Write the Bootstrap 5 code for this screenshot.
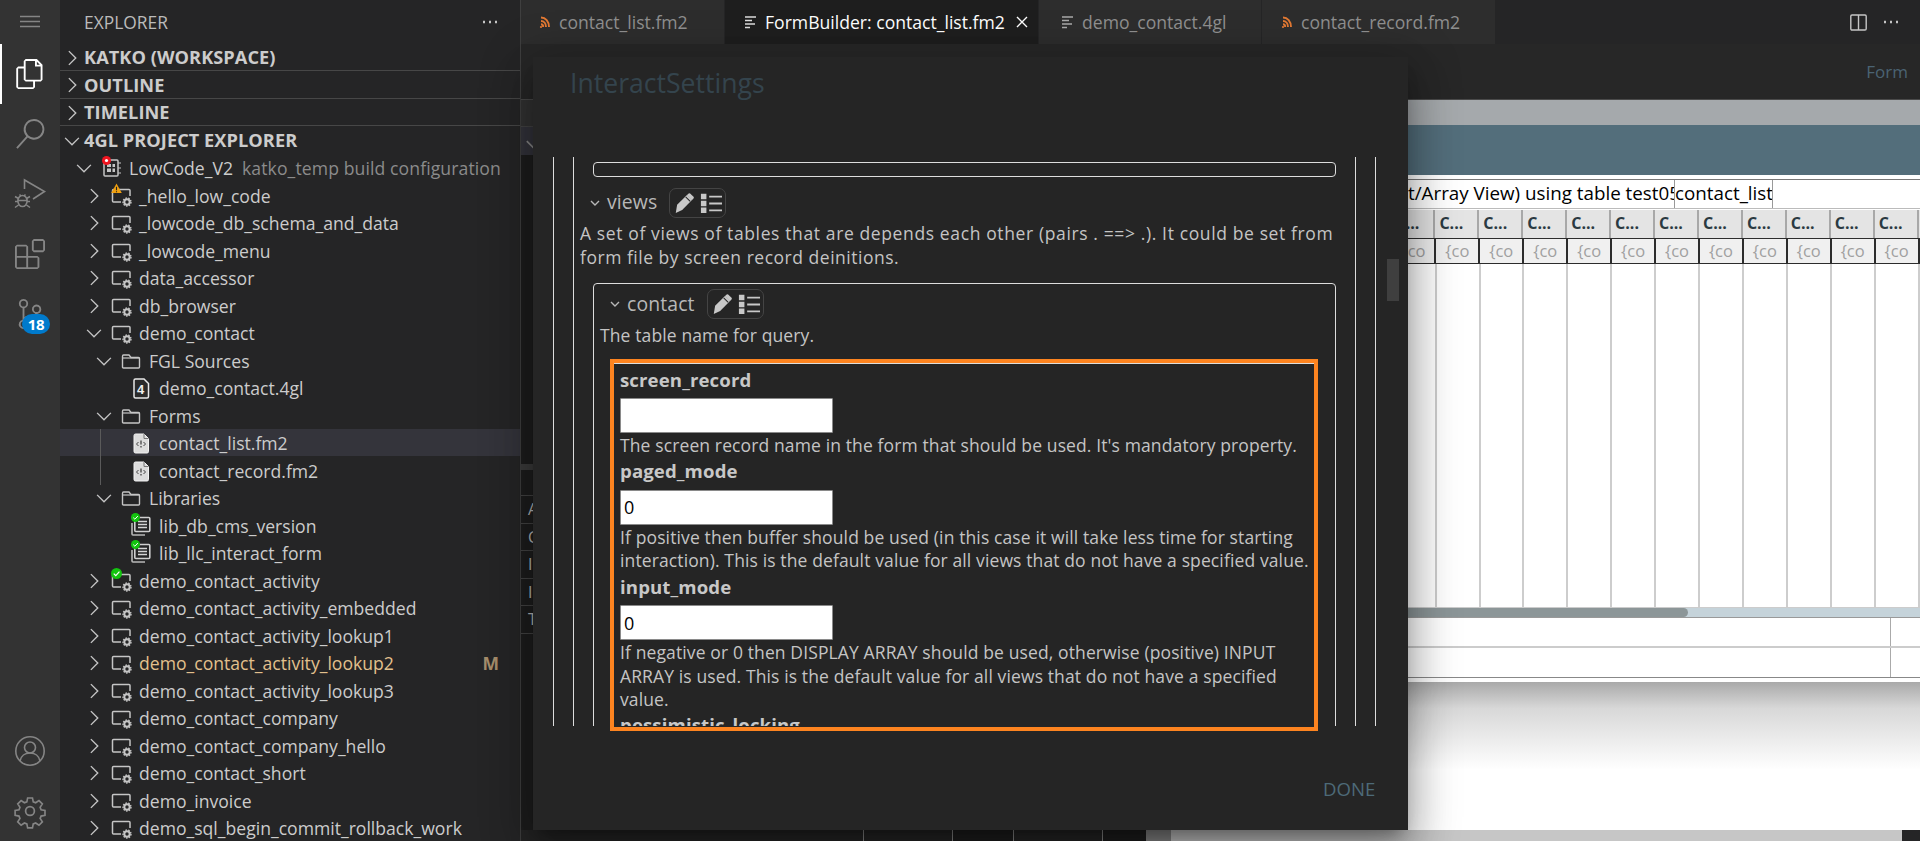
<!DOCTYPE html>
<html lang="en">
<head>
<meta charset="utf-8">
<title>FormBuilder: contact_list.fm2</title>
<link href="https://cdn.jsdelivr.net/npm/bootstrap@5.3.0/dist/css/bootstrap.min.css" rel="stylesheet">
<style>
html,body{height:100%;margin:0}
body{width:1920px;height:841px;overflow:hidden;background:#252526;color:#ccc;font-family:"Open Sans","Noto Sans",sans-serif;font-size:17.6px;position:relative}
.actbar{width:60px;background:#333;flex:none}
.actitem{height:60px;width:60px;color:#858585}
.actitem.on{color:#fff;border-left:2px solid #fff;padding-right:2px}
.scbadge{position:absolute;left:22px;top:30px;width:28px;height:20px;border-radius:10px;background:#007acc;color:#fff;font-size:15px;font-weight:700;line-height:20px;text-align:center;letter-spacing:-.3px}
.sidebar{width:460px;background:#252526;flex:none;overflow:hidden}
.sidetitle{height:44px;padding:0 24px 0 24px;font-size:17.4px;letter-spacing:0;color:#bbb}
.sechead{height:27.5px;font-weight:700;font-size:18.2px;letter-spacing:.05px;color:#ccc;border-bottom:1px solid #474747;padding:2px 0 0 2px}
.sechead.last{border-bottom:0}
.sechead .ch{margin-right:2px}
.ch{width:20px;height:20px;flex:none;color:#c5c5c5}
.trow{height:27.5px;white-space:nowrap;padding-top:2px}
.lv0{padding-left:14px}.lv1{padding-left:24px}.lv2{padding-left:34px}.lv3{padding-left:44px}
.spacer20{width:20px;flex:none}
.ico{width:22px;height:22px;flex:none;margin:0 7px 0 6px;position:relative;color:#c5c5c5}
.ico>svg{display:block;width:22px;height:22px}
.ico .st{position:absolute;left:1px;top:-2px;width:11px;height:11px}
.muted1{color:#8b8b8b;margin-left:9px;letter-spacing:.1px}
.mod{color:#e2c08d}
.mflag{color:#a58d6b;font-weight:700;margin-left:auto;margin-right:21px;font-size:17.5px}
.hoverrow{background:#34343b}
.guidewrap{position:relative}
.guidewrap::before{content:"";position:absolute;left:40px;top:0;bottom:-1px;width:1px;background:#5a5a5a;z-index:1}
.mainpane{width:1400px;flex:none;border-left:1px solid #3f3f3f;margin-left:0}
.tabbar{height:44px;background:#252526;flex:none}
.tabx{height:44px;flex:none;background:#2d2d2d;color:#8f8f8f;border-right:1px solid #252526;white-space:nowrap;overflow:hidden}
.tabx.active{background:#1e1e1e;color:#fff}
.t1{width:204px;padding-left:17px}.t2{width:314px;padding-left:19px}.t3{width:223px;padding-left:22px}.t4{width:234px;padding-left:18px}
.tabico{width:14px;height:16px;flex:none;margin-right:7px}
.topzone{height:56px;background:#272727;flex:none;color:#4b6373;font-size:17px;padding-right:12px;border-bottom:1px solid #4a4a4a}
.bodyzone{height:730px;flex:none}
.leftstub{width:13px;flex:none;background:#1e1e1e;overflow:hidden}
.stub1{height:27px;background:#333;border-bottom:1px solid #444}
.stub2{height:28px;background:#34343c;color:#888}
.stub3{height:315px;background:#1e1e1e;border-bottom:6px solid #3c3c3c}
.stub4{height:25px}
.stub5{height:27.5px;border-top:1px solid #444;padding-left:7px;font-size:16px;color:#bbb;line-height:27px}
.darkgap{width:612px;flex:none;background:#1e1e1e}
.canvasx{width:775px;flex:none;background:#fff}
.fbar{height:25px;background:#a5a9ac}
.fhead{height:50px;background:#536e7b}
.ftitlebar{height:30px;margin:4px 0 1px 25px;border-top:1px solid #777;border-bottom:1px solid #bbb;color:#000;font-size:18.8px;white-space:nowrap}
.fcaption{width:503px;overflow:hidden;flex:none;justify-content:flex-end;display:flex;line-height:27px}
.fcaption span{margin-right:-6px}
.fvalue{width:99px;border-left:1px solid #999;border-right:1px solid #999;flex:none;line-height:27px;overflow:hidden}
.gridrow{padding-left:220.500px;margin-left:25px;display:grid;grid-template-columns:repeat(14,43.93px)}
.hcell{height:28px;background:#e4e4e4;border-right:2px solid #a8a8a8;color:#2b3a42;font-weight:700;font-size:16px;padding-left:4px;line-height:26px;overflow:hidden;white-space:nowrap}
.icell{height:26px;background:#f0f0f0;border:1px solid #2c2c2c;color:#a0a0a0;font-size:16.5px;line-height:23px;text-align:center;overflow:hidden;white-space:nowrap}
.gridfill{height:343px;margin-left:25px;background-image:repeating-linear-gradient(90deg,#cdcdcd 0,#cdcdcd 2px,transparent 2px,transparent 43.93px);background-position:0 0}
.hscroll{height:11px;margin-left:25px;background:#c5d3da;border-top:1px solid #ccc;border-bottom:1px solid #999}
.hthumb{width:517px;height:100%;background:#8c9698;border-radius:0 5px 5px 0}
.frow{height:30px;margin-left:25px;border-bottom:2px solid #ccc}
.frow.endrow{border-bottom:1px solid #888}
.fcut{width:720px;flex:none;border-right:1px solid #aaa}
.fshadow{height:88px;background:linear-gradient(#a9a9a9,#d8d8d8 30%,#fff);margin-top:4px}
.botstrip{height:11px;flex:none}
.bdark{width:625px;flex:none;background:#1e1e1e}
.bseg{height:100%;background:#252525;flex:none;border-right:1px solid #888}
.bgut{width:25px;flex:none;background:#888}
.bgrey{width:731px;flex:none;background:#c6c6c6}
.dlg{position:absolute;left:533px;top:57px;width:875px;height:773px;background:#252525;border:0;border-radius:0;box-shadow:0 11px 15px -7px rgba(0,0,0,.3),0 24px 38px 3px rgba(0,0,0,.22),0 9px 46px 8px rgba(0,0,0,.2);z-index:5}
.dlgtitle{height:100px;padding:8px 0 0 37px;font-size:26.6px;color:#34444d;line-height:36px}
.scroller{height:569px;margin-left:20px;width:823px;overflow:hidden;font-size:17.5px;line-height:23.6px;letter-spacing:.12px;color:#c4c4c4;white-space:nowrap}
.nest1{border-left:1px solid #ddd;border-right:1px solid #ddd;padding:0 19px;height:569px;overflow:hidden}
.nest2{border-left:1px solid #ddd;border-right:1px solid #ddd;padding:5px 19px 0 6px}
.emptybox{height:15px;margin-left:13px;border:1px solid #ddd;border-radius:4px;margin-right:0}
.proprow{height:30px;color:#b8b8b8}
.proprow.p1{margin:11px 0 4px 8px}
.proprow.p2{margin:5px 0 5px 0}
.proprow.p1 .propname{margin-top:-2px}
.miniCh{width:14px;height:14px;flex:none;margin-right:5px}
.propname{font-size:19.4px}
.ibtn{margin-left:12px;width:57px;height:30px;border:1px solid #444;border-radius:7px;flex:none;padding:0 3px;gap:5px}
.ibtn svg{width:22px;height:22px;color:#c8c8c8;display:block}
.viewbox{margin:14px 0 0 13px;border:1px solid #ddd;border-radius:4px 4px 0 0;padding:0 6px;height:500px}
.viewbox .proprow .miniCh{margin-left:8px}
.descline{margin:0}
.stretch1{letter-spacing:.62px}
.stretch2{letter-spacing:.52px}
.innercard{margin:15px 12px 0 12px;border-top:1px solid #ddd;padding:4px 0 0 8px}
.flabel{font-weight:700;font-size:18.6px;line-height:24px;color:#c8c8c8;margin:0}
.finput{display:block;width:213px;height:35px;padding:0 3px;margin:6.500px 0 1px;border:1px solid #8a8a8a;border-radius:1px;background:#fff;color:#000;font-size:18px;line-height:28px;font-family:inherit}
.finput:focus{background:#fff;color:#000;box-shadow:none;border-color:#8a8a8a}
.fdesc{margin:0 0 1.500px;line-height:23.6px}
.orangebox{position:absolute;left:77px;top:302px;width:708px;height:372px;border:4px solid #fd8420;pointer-events:none}
.vthumb{position:absolute;left:854px;top:202px;width:12px;height:42px;background:#3f3f3f}
.donebtn{position:absolute;left:790px;top:717px;padding:0;border:0;background:none;font-size:18.6px;color:#4d6a78;line-height:30px}
.donebtn:hover{color:#4d6a78}
svg{overflow:visible}
</style>
</head>
<body class="d-flex">
<svg width="0" height="0" class="position-absolute">
<defs>
<symbol id="cr" viewBox="0 0 16 16"><path d="M5.5 2.5 11 8l-5.500 5.500" fill="none" stroke="currentColor" stroke-width="1.1"/></symbol>
<symbol id="cd" viewBox="0 0 16 16"><path d="M2.500 5.500 8 11l5.500-5.500" fill="none" stroke="currentColor" stroke-width="1.1"/></symbol>
<symbol id="prj" viewBox="0 0 22 22"><path d="M20 11V5.500q0-1-1-1H3.500q-1 0-1 1V16q0 1 1 1H11" fill="none" stroke="currentColor" stroke-width="1.500"/><circle cx="17" cy="17" r="2.700" fill="none" stroke="currentColor" stroke-width="2"/><circle cx="17" cy="17" r="4" fill="none" stroke="currentColor" stroke-width="1.400" stroke-dasharray="1.500 1.300"/></symbol>
<symbol id="fld" viewBox="0 0 22 22"><path d="M2.500 6.500q0-1.500 1-1.500H9l2 2.500h7.500q1 0 1 1V17q0 1-1 1h-15q-1 0-1-1z" fill="none" stroke="currentColor" stroke-width="1.400"/><path d="M2.500 8h17" stroke="currentColor" stroke-width="1.200"/></symbol>
<symbol id="fm" viewBox="0 0 22 22"><path d="M4 3.500q0-1.500 1.500-1.500H14l4.500 4.500v13q0 1.500-1.500 1.500H5.500Q4 21 4 19.500z" fill="#dcdcdc" stroke="#f2f2f2"/><path d="M14 2v4.500h4.500" fill="none" stroke="#777"/><path d="M8.500 10 6.500 12l2 2m5-4 2 2-2 2" fill="none" stroke="#444" stroke-width="1"/><path d="M11 8.500v4m0 1.500v1.500" stroke="#444" stroke-width="1.300"/></symbol>
<symbol id="lib" viewBox="0 0 22 22"><path d="M2 8v11q0 1 1 1h12" fill="none" stroke="#b8b8b8" stroke-width="1.600"/><rect x="4.800" y="2.500" width="15" height="14" rx="1" fill="none" stroke="#cfcfcf" stroke-width="1.600"/><path d="M8 6.500h9M8 9.500h9M8 12.500h9" stroke="#d5d5d5" stroke-width="1.500"/></symbol>
<symbol id="rss" viewBox="0 0 14 16"><path d="M3 3.500c4.500 0 8 3.800 8 9.500M3 7c2.800 0 5 2.500 5 6M3 10.300c1.300 0 2.200 1.200 2.200 2.700" fill="none" stroke="#e37933" stroke-width="1.900"/><circle cx="3" cy="13" r="1.100" fill="#e37933"/></symbol>
<symbol id="lines" viewBox="0 0 14 16"><path d="M1 3h11M1 6.500h7M1 10h10M1 13.500h5" fill="none" stroke="currentColor" stroke-width="1.500"/></symbol>
<symbol id="pen" viewBox="0 0 24 24"><path d="M3 23 4.500 14 15.500 3 21 8.500 10 19.500z" fill="currentColor"/><path d="M16.700 1.800q1-1 2-.2l3.700 3.600q.9 1-.1 2L20.800 8.600 15.400 3.200z" fill="currentColor"/><path d="M13.800 5.300l5 5" stroke="#252525" stroke-width="1.100"/></symbol>
<symbol id="lst" viewBox="0 0 24 24"><path d="M1 2h6v6H1zm0 7.500h6v6H1zM1 17h6v6H1zM10 4h14v2H10zm0 7.500h14v2H10zm0 7.500h14v2H10z" fill="currentColor"/></symbol>
<symbol id="warn" viewBox="0 0 12 12"><path d="M6 .5 11.800 11H.2z" fill="#f0a010"/><path d="M6 4v4M6 9v1.200" stroke="#222" stroke-width="1.200"/></symbol>
<symbol id="ok" viewBox="0 0 12 12"><circle cx="6" cy="6" r="6" fill="#13c40f"/><path d="M3 6.200 5.200 8.300 9.200 4" fill="none" stroke="#fff" stroke-width="1.300"/></symbol>
</defs>
</svg>

<aside class="actbar d-flex flex-column">
  <div class="d-flex align-items-center justify-content-center" style="height:44px;color:#858585">
    <svg width="20" height="14" viewBox="0 0 20 14"><path d="M0 1.500h20M0 6.500h20M0 11.500h20" stroke="currentColor" stroke-width="1.300"/></svg>
  </div>
  <div class="actitem on d-flex align-items-center justify-content-center">
    <svg width="30" height="30" viewBox="0 0 24 24"><path fill="currentColor" d="M17.500 0h-9L7 1.500V6H2.500L1 7.500v15.070L2.500 24h12.070L16 22.570V18h4.700l1.300-1.430V4.500L17.500 0zm0 2.120l2.380 2.380H17.500V2.120zm-3 20.380h-12v-15H7v9.070L8.500 18h6v4.500zm6-6h-12v-15H16V6h4.500v10.500z"/></svg>
  </div>
  <div class="actitem d-flex align-items-center justify-content-center">
    <svg width="30" height="30" viewBox="0 0 24 24"><path fill="currentColor" d="M15.250 0a8.250 8.250 0 0 0-6.180 13.720L1 22.880l1.120 1 8.050-9.120A8.251 8.251 0 1 0 15.250.01V0zm0 15a6.750 6.750 0 1 1 0-13.500 6.750 6.750 0 0 1 0 13.500z"/></svg>
  </div>
  <div class="actitem d-flex align-items-center justify-content-center">
    <svg width="30" height="30" viewBox="0 0 30 30"><path d="M9.500 10V1L29.500 12.500 18 20" fill="none" stroke="currentColor" stroke-width="1.600"/><ellipse cx="7.500" cy="22" rx="4.600" ry="5.500" fill="none" stroke="currentColor" stroke-width="1.600"/><path d="M3 21.500h9M0 17.500l3.500 2M15 17.500l-3.500 2M0 22.500h3M12 22.500h3M0 28.500l3.500-2.500M15 28.500l-3.500-2.500M4.500 15.500l1.500 1.500M10.500 15.500 9 17" stroke="currentColor" stroke-width="1.500" fill="none"/></svg>
  </div>
  <div class="actitem d-flex align-items-center justify-content-center">
    <svg width="30" height="30" viewBox="0 0 24 24"><path fill="currentColor" d="M13.500 1.500L15 0h7.500L24 1.500V9l-1.500 1.500H15L13.500 9V1.500zm1.500 0V9h7.500V1.500H15zM0 15V6l1.500-1.500H9L10.500 6v7.500H18l1.500 1.500v7.500L18 24H1.500L0 22.500V15zm9-1.500V6H1.500v7.500H9zM9 15H1.500v7.500H9V15zm1.500 7.500H18V15h-7.500v7.500z"/></svg>
  </div>
  <div class="actitem position-relative d-flex align-items-center justify-content-center">
    <svg width="30" height="30" viewBox="0 0 24 24"><path fill="currentColor" d="M21.007 8.222A3.738 3.738 0 0 0 15.045 5.200a3.737 3.737 0 0 0 1.156 6.583 2.988 2.988 0 0 1-2.668 1.670h-2.990a4.456 4.456 0 0 0-2.989 1.165V7.400a3.737 3.737 0 1 0-1.494 0v9.117a3.776 3.776 0 1 0 1.816.099 2.990 2.990 0 0 1 2.668-1.667h2.990a4.484 4.484 0 0 0 4.223-3.039 3.736 3.736 0 0 0 3.250-3.687zM4.565 3.738a2.242 2.242 0 1 1 4.484 0 2.242 2.242 0 0 1-4.484 0zm4.484 16.441a2.242 2.242 0 1 1-4.484 0 2.242 2.242 0 0 1 4.484 0zm8.221-9.715a2.242 2.242 0 1 1 0-4.485 2.242 2.242 0 0 1 0 4.485z"/></svg>
    <span class="scbadge">18</span>
  </div>
  <div class="mt-auto actitem d-flex align-items-center justify-content-center">
    <svg width="30" height="30" viewBox="0 0 30 30" fill="none" stroke="currentColor" stroke-width="1.600"><circle cx="15" cy="15" r="14.200"/><circle cx="15" cy="11.500" r="5.500"/><path d="M5 25c1-5 5-8 10-8s9 3 10 8"/></svg>
  </div>
  <div class="actitem d-flex align-items-center justify-content-center">
    <svg width="30" height="30" viewBox="0 0 30 30" fill="none" stroke="currentColor" stroke-width="1.700"><circle cx="15" cy="15" r="4.400"/><path d="M12.500 1.500h5l.8 4 2.500 1 3.400-2.300 3.500 3.500-2.300 3.400 1 2.500 4 .8v5l-4 .8-1 2.500 2.300 3.400-3.500 3.500-3.400-2.300-2.500 1-.8 4h-5l-.8-4-2.500-1-3.400 2.300-3.500-3.500 2.300-3.400-1-2.500-4-.8v-5l4-.8 1-2.500L2.300 7.700l3.500-3.500 3.400 2.300 2.500-1z" transform="translate(.5 .5) scale(.97)"/></svg>
  </div>
</aside>

<aside class="sidebar d-flex flex-column">
  <div class="sidetitle d-flex align-items-center justify-content-between"><span>EXPLORER</span>
    <svg width="16" height="4" viewBox="0 0 16 4" style="margin-right:-2px"><path d="M1 2h2M7 2h2M13 2h2" stroke="#c5c5c5" stroke-width="2.400"/></svg></div>
  <div class="sechead d-flex align-items-center"><svg class="ch"><use href="#cr"/></svg>KATKO (WORKSPACE)</div>
  <div class="sechead d-flex align-items-center"><svg class="ch"><use href="#cr"/></svg>OUTLINE</div>
  <div class="sechead d-flex align-items-center"><svg class="ch"><use href="#cr"/></svg>TIMELINE</div>
  <div class="sechead last d-flex align-items-center"><svg class="ch"><use href="#cd"/></svg>4GL PROJECT EXPLORER</div>

  <div class="trow lv0 d-flex align-items-center"><svg class="ch"><use href="#cd"/></svg>
    <span class="ico"><svg viewBox="0 0 22 22"><rect x="4" y="3" width="14" height="16" rx="1" fill="none" stroke="currentColor" stroke-width="1.500"/><path d="M7 7h4v3H7zm5.500 0H15v3h-2.500zM7 11.500h4V15H7zm5.500 0H15V15h-2.500z" fill="currentColor"/><path d="M18 6h3M18 11h3M18 16h3" stroke="currentColor"/></svg><svg class="st" style="left:2px;top:-1px;width:9px;height:9px" viewBox="0 0 10 10"><circle cx="5" cy="5" r="5" fill="#ef1520"/><circle cx="5" cy="5" r="1.800" fill="#fff"/></svg></span>LowCode_V2<span class="muted1">katko_temp build configuration</span></div>
  <div class="trow lv1 d-flex align-items-center"><svg class="ch"><use href="#cr"/></svg><span class="ico"><svg><use href="#prj"/></svg><svg class="st"><use href="#warn"/></svg></span>_hello_low_code</div>
  <div class="trow lv1 d-flex align-items-center"><svg class="ch"><use href="#cr"/></svg><span class="ico"><svg><use href="#prj"/></svg></span>_lowcode_db_schema_and_data</div>
  <div class="trow lv1 d-flex align-items-center"><svg class="ch"><use href="#cr"/></svg><span class="ico"><svg><use href="#prj"/></svg></span>_lowcode_menu</div>
  <div class="trow lv1 d-flex align-items-center"><svg class="ch"><use href="#cr"/></svg><span class="ico"><svg><use href="#prj"/></svg></span>data_accessor</div>
  <div class="trow lv1 d-flex align-items-center"><svg class="ch"><use href="#cr"/></svg><span class="ico"><svg><use href="#prj"/></svg></span>db_browser</div>
  <div class="trow lv1 d-flex align-items-center"><svg class="ch"><use href="#cd"/></svg><span class="ico"><svg><use href="#prj"/></svg></span>demo_contact</div>
  <div class="trow lv2 d-flex align-items-center"><svg class="ch"><use href="#cd"/></svg><span class="ico"><svg><use href="#fld"/></svg></span>FGL Sources</div>
  <div class="trow lv3 d-flex align-items-center"><span class="spacer20"></span><span class="ico"><svg viewBox="0 0 22 22"><path d="M4 3.500q0-1.500 1.500-1.500H14l4.500 4.500v13q0 1.500-1.500 1.500H5.500Q4 21 4 19.500z" fill="#2a2a2a" stroke="#e8e8e8" stroke-width="1.500"/><text x="7" y="17" font-size="13" font-weight="700" fill="#eee" font-family="Liberation Sans, sans-serif">4</text></svg></span>demo_contact.4gl</div>
  <div class="trow lv2 d-flex align-items-center"><svg class="ch"><use href="#cd"/></svg><span class="ico"><svg><use href="#fld"/></svg></span>Forms</div>
  <div class="guidewrap">
    <div class="trow lv3 hoverrow d-flex align-items-center"><span class="spacer20"></span><span class="ico"><svg><use href="#fm"/></svg></span>contact_list.fm2</div>
    <div class="trow lv3 d-flex align-items-center"><span class="spacer20"></span><span class="ico"><svg><use href="#fm"/></svg></span>contact_record.fm2</div>
  </div>
  <div class="trow lv2 d-flex align-items-center"><svg class="ch"><use href="#cd"/></svg><span class="ico"><svg><use href="#fld"/></svg></span>Libraries</div>
  <div class="trow lv3 d-flex align-items-center"><span class="spacer20"></span><span class="ico"><svg><use href="#lib"/></svg><svg class="st" style="width:9px;height:9px"><use href="#ok"/></svg></span>lib_db_cms_version</div>
  <div class="trow lv3 d-flex align-items-center"><span class="spacer20"></span><span class="ico"><svg><use href="#lib"/></svg><svg class="st" style="width:9px;height:9px"><use href="#ok"/></svg></span>lib_llc_interact_form</div>
  <div class="trow lv1 d-flex align-items-center"><svg class="ch"><use href="#cr"/></svg><span class="ico"><svg><use href="#prj"/></svg><svg class="st"><use href="#ok"/></svg></span>demo_contact_activity</div>
  <div class="trow lv1 d-flex align-items-center"><svg class="ch"><use href="#cr"/></svg><span class="ico"><svg><use href="#prj"/></svg></span>demo_contact_activity_embedded</div>
  <div class="trow lv1 d-flex align-items-center"><svg class="ch"><use href="#cr"/></svg><span class="ico"><svg><use href="#prj"/></svg></span>demo_contact_activity_lookup1</div>
  <div class="trow lv1 d-flex align-items-center"><svg class="ch"><use href="#cr"/></svg><span class="ico"><svg><use href="#prj"/></svg></span><span class="mod">demo_contact_activity_lookup2</span><span class="mflag">M</span></div>
  <div class="trow lv1 d-flex align-items-center"><svg class="ch"><use href="#cr"/></svg><span class="ico"><svg><use href="#prj"/></svg></span>demo_contact_activity_lookup3</div>
  <div class="trow lv1 d-flex align-items-center"><svg class="ch"><use href="#cr"/></svg><span class="ico"><svg><use href="#prj"/></svg></span>demo_contact_company</div>
  <div class="trow lv1 d-flex align-items-center"><svg class="ch"><use href="#cr"/></svg><span class="ico"><svg><use href="#prj"/></svg></span>demo_contact_company_hello</div>
  <div class="trow lv1 d-flex align-items-center"><svg class="ch"><use href="#cr"/></svg><span class="ico"><svg><use href="#prj"/></svg></span>demo_contact_short</div>
  <div class="trow lv1 d-flex align-items-center"><svg class="ch"><use href="#cr"/></svg><span class="ico"><svg><use href="#prj"/></svg></span>demo_invoice</div>
  <div class="trow lv1 d-flex align-items-center"><svg class="ch"><use href="#cr"/></svg><span class="ico"><svg><use href="#prj"/></svg></span>demo_sql_begin_commit_rollback_work</div>
</aside>

<main class="mainpane d-flex flex-column">
  <div class="tabbar d-flex">
    <div class="tabx t1 d-flex align-items-center"><svg class="tabico"><use href="#rss"/></svg>contact_list.fm2</div>
    <div class="tabx t2 active d-flex align-items-center"><svg class="tabico" style="color:#ddd"><use href="#lines"/></svg>FormBuilder: contact_list.fm2
      <svg width="12" height="12" viewBox="0 0 12 12" style="margin-left:11px;flex:none"><path d="M1 1l10 10M11 1 1 11" stroke="#fff" stroke-width="1.400"/></svg></div>
    <div class="tabx t3 d-flex align-items-center"><svg class="tabico" style="color:#aaa"><use href="#lines"/></svg>demo_contact.4gl</div>
    <div class="tabx t4 d-flex align-items-center"><svg class="tabico"><use href="#rss"/></svg>contact_record.fm2</div>
    <div class="flex-grow-1 d-flex align-items-center justify-content-end" style="padding-right:21px;gap:16px">
      <svg width="17" height="17" viewBox="0 0 17 17"><rect x=".8" y="1" width="15.400" height="15" rx="1.200" fill="none" stroke="#c5c5c5" stroke-width="1.400"/><path d="M8.500 1v15" stroke="#c5c5c5" stroke-width="1.400"/></svg>
      <svg width="16" height="4" viewBox="0 0 16 4"><path d="M1 2h2M7 2h2M13 2h2" stroke="#c5c5c5" stroke-width="2.400"/></svg>
    </div>
  </div>
  <div class="topzone d-flex align-items-center justify-content-end">Form</div>
  <div class="bodyzone d-flex">
    <div class="leftstub">
      <div class="stub1"></div>
      <div class="stub2"><svg width="18" height="18" style="margin:4px 0 0 3px" viewBox="0 0 16 16"><path d="M2.500 5.500 8 11l5.500-5.500" fill="none" stroke="currentColor" stroke-width="1.500"/></svg></div>
      <div class="stub3"></div>
      <div class="stub4"></div>
      <div class="stub5">A</div><div class="stub5">C</div><div class="stub5">I</div><div class="stub5">I</div><div class="stub5">T</div><div class="stub5"></div>
    </div>
    <div class="darkgap"></div>
    <div class="canvasx">
      <div class="fbar"></div>
      <div class="fhead"></div>
      <div class="ftitlebar d-flex">
        <div class="fcaption"><span>Contact List (List/Array View) using table test05</span></div>
        <div class="fvalue">contact_list</div>
      </div>
      <div class="gridrow">
        <div class="hcell">C...</div><div class="hcell">C...</div><div class="hcell">C...</div><div class="hcell">C...</div><div class="hcell">C...</div><div class="hcell">C...</div><div class="hcell">C...</div><div class="hcell">C...</div><div class="hcell">C...</div><div class="hcell">C...</div><div class="hcell">C...</div><div class="hcell">C...</div><div class="hcell">C...</div><div class="hcell"></div>
      </div>
      <div class="gridrow">
        <div class="icell">{co</div><div class="icell">{co</div><div class="icell">{co</div><div class="icell">{co</div><div class="icell">{co</div><div class="icell">{co</div><div class="icell">{co</div><div class="icell">{co</div><div class="icell">{co</div><div class="icell">{co</div><div class="icell">{co</div><div class="icell">{co</div><div class="icell">{co</div><div class="icell"></div>
      </div>
      <div class="gridfill"></div>
      <div class="hscroll"><div class="hthumb"></div></div>
      <div class="frow d-flex"><div class="fcut"></div></div>
      <div class="frow endrow d-flex"><div class="fcut"></div></div>
      <div class="fshadow"></div>
    </div>
  </div>
  <div class="botstrip d-flex">
    <div class="bdark d-flex">
      <div class="bseg" style="width:343px"></div><div style="width:89px" class="bseg"></div><div style="width:61px;background:#1e1e1e" class="bseg"></div><div style="width:89px" class="bseg"></div>
    </div>
    <div class="bgut"></div>
    <div class="bgrey"></div>
  </div>
</main>

<section class="dlg card">
  <div class="dlgtitle">InteractSettings</div>
  <div class="scroller">
    <div class="nest1"><div class="nest2">
      <div class="emptybox"></div>
      <div class="proprow p1 d-flex align-items-center">
        <svg class="miniCh" viewBox="0 0 14 14"><path d="M3 5l4 4 4-4" fill="none" stroke="currentColor" stroke-width="1.400"/></svg>
        <span class="propname">views</span>
        <span class="ibtn d-flex align-items-center"><svg><use href="#pen"/></svg><svg><use href="#lst"/></svg></span>
      </div>
      <p class="descline"><span class="stretch1">A set of views of tables that are depends each other (pairs . ==&gt; .). It could be set from</span><br><span class="stretch2">form file by screen record deinitions.</span></p>
      <div class="viewbox">
        <div class="proprow p2 d-flex align-items-center">
          <svg class="miniCh" viewBox="0 0 14 14"><path d="M3 5l4 4 4-4" fill="none" stroke="currentColor" stroke-width="1.400"/></svg>
          <span class="propname">contact</span>
          <span class="ibtn d-flex align-items-center"><svg><use href="#pen"/></svg><svg><use href="#lst"/></svg></span>
        </div>
        <p class="descline">The table name for query.</p>
        <div class="innercard">
          <p class="flabel">screen_record</p>
          <input class="finput form-control" type="text" value="" aria-label="screen_record">
          <p class="fdesc">The screen record name in the form that should be used. It's mandatory property.</p>
          <p class="flabel">paged_mode</p>
          <input class="finput form-control" type="text" value="0" aria-label="paged_mode">
          <p class="fdesc">If positive then buffer should be used (in this case it will take less time for starting<br>interaction). This is the default value for all views that do not have a specified value.</p>
          <p class="flabel">input_mode</p>
          <input class="finput form-control" type="text" value="0" aria-label="input_mode">
          <p class="fdesc">If negative or 0 then DISPLAY ARRAY should be used, otherwise (positive) INPUT<br>ARRAY is used. This is the default value for all views that do not have a specified<br>value.</p>
          <p class="flabel">pessimistic_locking</p>
        </div>
      </div>
    </div></div>
  </div>
  <div class="vthumb"></div>
  <div class="orangebox"></div>
  <button type="button" class="btn donebtn">DONE</button>
</section>
<script src="https://cdn.jsdelivr.net/npm/bootstrap@5.3.0/dist/js/bootstrap.bundle.min.js"></script>
</body>
</html>
